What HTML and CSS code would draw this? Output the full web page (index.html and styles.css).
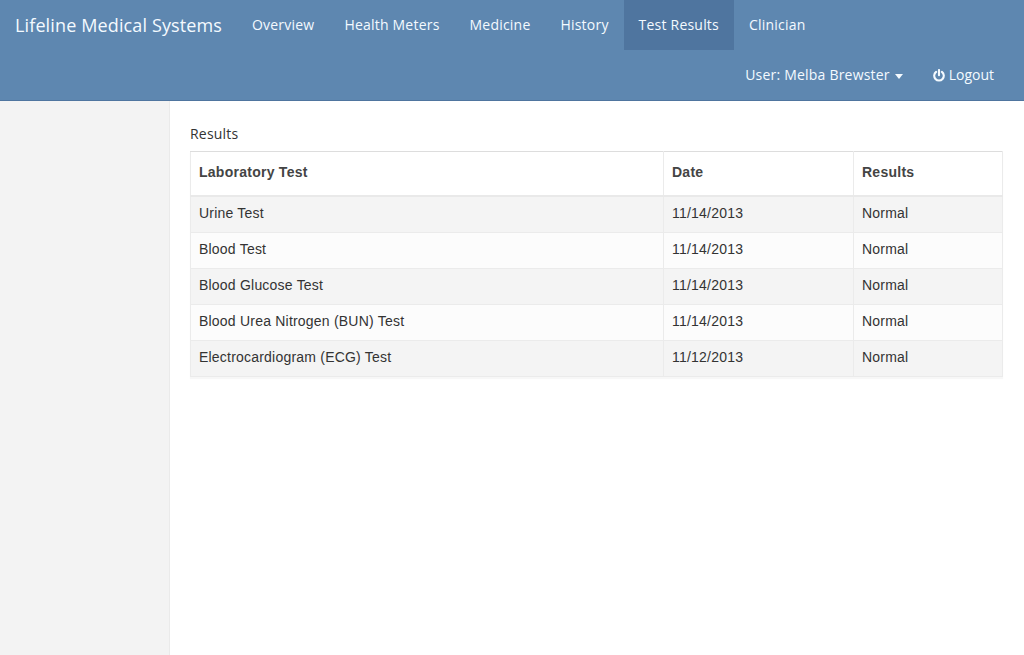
FILE: index.html
```html
<!DOCTYPE html>
<html lang="en">
<head>
<meta charset="utf-8">
<title>Lifeline Medical Systems</title>
<link rel="stylesheet" href="styles.css">
</head>
<body>
<header class="navbar">
  <div class="nav-row">
    <a class="brand">Lifeline Medical Systems</a>
    <nav class="nav">
      <a class="nav-link">Overview</a>
      <a class="nav-link">Health Meters</a>
      <a class="nav-link">Medicine</a>
      <a class="nav-link">History</a>
      <a class="nav-link active">Test Results</a>
      <a class="nav-link">Clinician</a>
    </nav>
  </div>
  <div class="nav-row nav-user">
    <a class="nav-link">User: Melba Brewster <span class="caret"></span></a>
    <a class="nav-link logout"><svg class="power" viewBox="0 0 12 13" width="12" height="13"><path d="M3.1 2.9A4.8 4.8 0 1 0 8.9 2.9M6 1v5.2" fill="none" stroke="#f4faff" stroke-width="2.1" stroke-linecap="round"/></svg>Logout</a>
  </div>
</header>
<div class="layout">
  <aside class="sidebar"></aside>
  <main class="content">
    <h1 class="title">Results</h1>
    <table class="results">
      <thead><tr><th class="c-test">Laboratory Test</th><th class="c-date">Date</th><th>Results</th></tr></thead>
      <tbody>
        <tr><td>Urine Test</td><td>11/14/2013</td><td>Normal</td></tr>
        <tr><td>Blood Test</td><td>11/14/2013</td><td>Normal</td></tr>
        <tr><td>Blood Glucose Test</td><td>11/14/2013</td><td>Normal</td></tr>
        <tr><td>Blood Urea Nitrogen (BUN) Test</td><td>11/14/2013</td><td>Normal</td></tr>
        <tr><td>Electrocardiogram (ECG) Test</td><td>11/12/2013</td><td>Normal</td></tr>
      </tbody>
    </table>
  </main>
</div>
</body>
</html>
```
FILE: styles.css
```css
* { box-sizing: border-box; }
body { margin: 0; height: 655px; display: flex; flex-direction: column; overflow: hidden; background: #fff; font: 14px/20px "Open Sans", sans-serif; letter-spacing: .21px; color: #333; }
.navbar { height: 101px; flex: none; background: #5e87b0; border-bottom: 1px solid #4f759f; color: #f4faff; }
.nav-row, .nav { display: flex; height: 50px; }
.brand { width: 237px; padding: 15px; font-size: 18px; letter-spacing: .13px; white-space: nowrap; }
.nav-link { padding: 15px; white-space: nowrap; }
.active { background: #4f759f; }
.nav-user { justify-content: flex-end; padding-right: 15px; }
.caret { display: inline-block; margin-left: 1px; vertical-align: middle; border: 4.5px solid transparent; border-top: 5px solid #f4faff; border-bottom: 0; }
.logout { display: flex; align-items: center; gap: 4px; letter-spacing: 0; }
.layout { display: flex; flex: 1; }
.sidebar { width: 170px; background: #f3f3f3; border-right: 1px solid #eaeaea; }
.content { flex: 1; padding: 23px 21px 0 20px; }
.title { margin: 0 0 7px; font-size: 14px; line-height: 20px; font-weight: 400; }
.results { width: 813px; table-layout: fixed; border-collapse: collapse; box-shadow: 0 2px 1px #f7f7f7; font-family: "Liberation Sans", sans-serif; }
.results th, .results td { height: 36px; padding: 6px 8px; text-align: left; vertical-align: top; border: 1px solid #ebebeb; }
.results th { height: 44px; padding-top: 10px; border-top-color: #ddd; border-bottom: 2px solid #e9e9e9; color: #444; letter-spacing: .26px; }
.results td { background: #fcfcfc; }
.results tbody tr:nth-child(odd) td { background: #f4f4f4; }
.results tbody tr:first-child td { height: 37px; }
.c-test { width: 473px; }
.c-date { width: 190px; }
```
